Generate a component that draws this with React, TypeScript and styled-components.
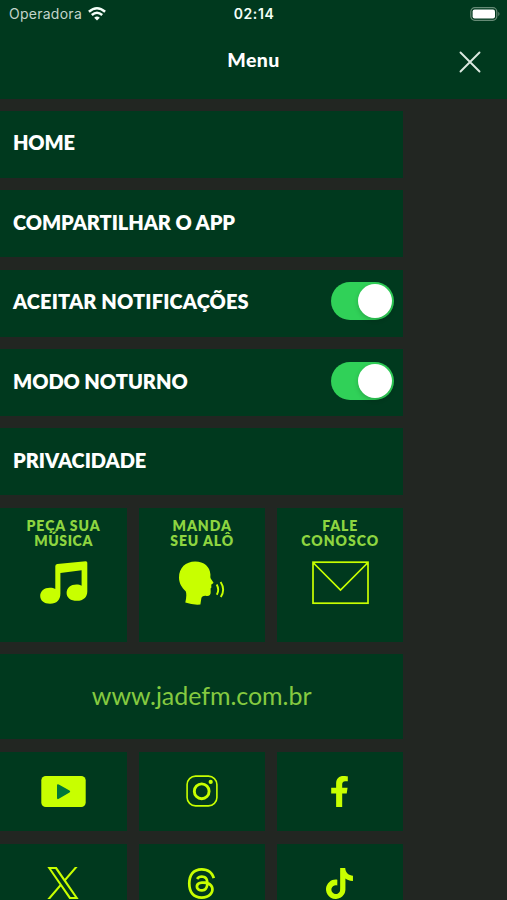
import React from "react";
import styled, { createGlobalStyle } from "styled-components";
import { FaFacebookF } from "react-icons/fa";
import { SiThreads, SiTiktok } from "react-icons/si";

const GlobalStyle = createGlobalStyle`
  * { box-sizing: border-box; }
  body { margin: 0; background: #222622; }
`;

const lime = "#c8ff00";
const panel = "#00391e";

const Screen = styled.div`
  width: 507px;
  height: 900px;
  overflow: hidden;
  background: #222622;
  color: #fff;
  font-family: Lato, "Liberation Sans", sans-serif;
`;

const Header = styled.header`
  height: 98.5px;
  background: ${panel};
`;

const StatusBar = styled.div`
  height: 28px;
  padding: 0 6px 0 9px;
  display: grid;
  grid-template-columns: 1fr auto 1fr;
  align-items: center;
  font-family: Inter, sans-serif;
  font-size: 14px;
  line-height: 28px;
`;

const Carrier = styled.div`
  display: flex;
  align-items: center;
  gap: 6px;
  color: #c3d5cb;
  letter-spacing: 0.26px;
`;

const Clock = styled.div`
  margin-right: 2px;
  font-weight: 600;
  letter-spacing: 0.6px;
  color: #f3fff8;
`;

const Battery = styled.div`
  display: flex;
  justify-content: flex-end;
`;

const TitleBar = styled.div`
  height: 66px;
  padding: 0 26px;
  display: grid;
  grid-template-columns: 1fr auto 1fr;
  align-items: center;
`;

const Title = styled.h1`
  grid-column: 2;
  margin: 0;
  padding-bottom: 2px;
  font-size: 19.5px;
  line-height: 24px;
  font-weight: 900;
  letter-spacing: 0.4px;
`;

const CloseButton = styled.button`
  justify-self: end;
  display: flex;
  padding: 0;
  margin-top: 2px;
  border: 0;
  background: none;
`;

const Menu = styled.main`
  width: 403.3px;
  padding-top: 12.3px;
  display: flex;
  flex-direction: column;
  gap: 12.2px;
`;

const MenuRow = styled.div`
  height: 67.2px;
  padding: 0 9.500px 4px 13px;
  display: flex;
  align-items: center;
  justify-content: space-between;
  background: ${panel};
`;

const Label = styled.span<{ $spacing: number }>`
  font-size: 20px;
  line-height: 24px;
  font-weight: 800;
  white-space: nowrap;
  letter-spacing: ${(p) => p.$spacing}px;
`;

const Switch = styled.button`
  width: 63px;
  height: 38px;
  padding: 2px;
  border: 0;
  border-radius: 19px;
  background: #30d158;
  display: flex;
  justify-content: flex-end;
`;

const Knob = styled.span`
  width: 34px;
  height: 34px;
  border-radius: 50%;
  background: #fff;
  box-shadow: 0 2px 5px rgba(0, 0, 0, 0.18);
`;

const TileGrid = styled.div`
  display: grid;
  grid-template-columns: 127.2px 126px 126px;
  column-gap: 12px;
`;

const ActionTile = styled.div`
  height: 134.2px;
  padding-top: 10.500px;
  display: flex;
  flex-direction: column;
  align-items: center;
  background: ${panel};
`;

const Caption = styled.div<{ $first: number; $second: number }>`
  height: 43px;
  font-size: 14px;
  line-height: 15px;
  font-weight: 800;
  text-align: center;
  white-space: nowrap;
  color: #8ed540;
  span { display: block; }
  span:first-child { letter-spacing: ${(p) => p.$first}px; }
  span:last-child { letter-spacing: ${(p) => p.$second}px; }
`;

const Website = styled.div`
  height: 85.4px;
  padding-bottom: 4px;
  display: flex;
  align-items: center;
  justify-content: center;
  background: ${panel};
  color: #85ca40;
  font-size: 25px;
  letter-spacing: -0.050px;
`;

const SocialTile = styled.div`
  height: 79.7px;
  padding-right: 1px;
  display: flex;
  align-items: center;
  justify-content: center;
  background: ${panel};
  color: ${lime};
`;

const WifiIcon = () => (
  <svg width="18" height="14" viewBox="0 0 18 14" fill="none" stroke="#f5fff9" strokeWidth="2.5">
    <path d="M.9 4.8Q9-2.2 17.1 4.8" />
    <path d="M3.8 8Q9 3.4 14.2 8" />
    <path d="M9 13.6 6.2 10.8Q9 8.3 11.8 10.8Z" fill="#f5fff9" stroke="none" />
  </svg>
);

const BatteryIcon = () => (
  <svg width="31" height="14" viewBox="0 0 31 14">
    <rect x=".8" y=".7" width="26" height="12.6" rx="4" fill="none" stroke="#668b76" strokeWidth="1.2" />
    <rect x="2.6" y="2.4" width="22.4" height="9.2" rx="2" fill="#fff" />
    <path d="M28.3 4.8q2.4 2.2 0 4.4z" fill="#668b76" />
  </svg>
);

const MusicIcon = () => (
  <svg width="48" height="44" viewBox="40 562 48 44" fill={lime}>
    <path d="M55.300 567.200q0-1.900 1.900-2.100L85.800 562.200q1.500 0 1.500 1.600V592.500c0 5.700-3.800 9.300-10.400 9.300-6.200 0-10.300-3.100-10.300-7.900 0-4.900 4.300-8.400 9.800-8.400 2.200 0 3.900.500 5.200 1.200V571.200L60.400 573.900V594.500c0 6.300-3.700 10.200-10.300 10.200-6.100 0-9.900-3.200-9.900-7.700 0-4.800 4.100-8.300 9.600-8.300 2.300 0 4.200.500 5.500 1.300z" />
  </svg>
);

const SpeakIcon = () => (
  <svg width="48" height="44" viewBox="178 561 48 44">
    <path
      fill={lime}
      d="M185.300 602.500c1-4.300 1.500-8.500.4-11.300-4.200-3.600-6.700-8.300-6.700-13.600 0-9.700 6.700-16 16.200-16 9 0 14.700 5.300 15.200 12.700.100 1.800-.300 2.800.3 4.100l2.700 4.200q.3 1-1.900 1.700l-.3 1.600.3 1.300-.9 1.400.1 3.300c0 3.100-1.200 4.200-4.200 4-3.500-.300-4.700.600-5.200 2.700l-.900 5.900q-7.500.700-15.100-2z"
    />
    <path d="M216.700 584.500q3 5.200.1 10.200M220.600 582q5 7.600.2 15" fill="none" stroke={lime} strokeWidth="1.900" />
  </svg>
);

const MailIcon = () => (
  <svg width="57" height="44" viewBox="0 0 57 44" fill="none" stroke={lime} strokeWidth="1.700">
    <rect x="1" y="1.200" width="55" height="41" />
    <path d="M1.500 2 28.500 29 55.500 2" />
    <path d="M1 1h3.500L1 4.500zM56 1h-3.500L56 4.500z" fill={lime} stroke="none" />
  </svg>
);

const YoutubeIcon = () => (
  <svg width="45" height="31" viewBox="0 0 45 31">
    <rect x=".3" width="44.400" height="31" rx="4.500" fill={lime} />
    <path d="M16 9.500q0-2 1.800-1L28.500 14.600q1.500.9 0 1.800L17.800 22.800q-1.800 1-1.800-1z" fill="#00763a" />
  </svg>
);

const InstagramIcon = () => (
  <svg width="32" height="32" viewBox="0 0 32 32" fill="none" stroke={lime}>
    <rect x="1.100" y="1.100" width="29.800" height="29.800" rx="8.500" strokeWidth="1.600" />
    <circle cx="15.700" cy="16.300" r="7.400" strokeWidth="2.900" />
    <circle cx="24.700" cy="6.900" r="2.100" fill={lime} stroke="none" />
  </svg>
);

const XIcon = () => (
  <svg width="32" height="32" viewBox="0 0 24 24" fill={lime}>
    <path d="M14.234 10.162 22.977 0h-2.072l-7.591 8.824L7.251 0H.258l9.168 13.343L.258 24H2.33l8.016-9.318L16.749 24h6.993zm-2.837 3.299-.929-1.329L3.076 1.56h3.182l5.965 8.532.929 1.329 7.754 11.09h-3.182z" />
  </svg>
);

const Toggle = ({ label }: { label: string }) => (
  <Switch role="switch" aria-checked aria-label={label}>
    <Knob />
  </Switch>
);

const menuItems = [
  { text: "HOME", spacing: -0.2, toggle: false },
  { text: "COMPARTILHAR O APP", spacing: -0.08, toggle: false },
  { text: "ACEITAR NOTIFICAÇÕES", spacing: 0.13, toggle: true },
  { text: "MODO NOTURNO", spacing: -0.05, toggle: true },
  { text: "PRIVACIDADE", spacing: -0.05, toggle: false },
];

export default function App() {
  return (
    <Screen>
      <GlobalStyle />
      <Header>
        <StatusBar>
          <Carrier>Operadora <WifiIcon /></Carrier>
          <Clock>02:14</Clock>
          <Battery><BatteryIcon /></Battery>
        </StatusBar>
        <TitleBar>
          <Title>Menu</Title>
          <CloseButton aria-label="Fechar">
            <svg width="22" height="22" viewBox="0 0 22 22" stroke="#dce9e1" strokeWidth="1.900" strokeLinecap="round">
              <path d="M1.500 1.500 20.500 20.500M20.500 1.500 1.500 20.500" />
            </svg>
          </CloseButton>
        </TitleBar>
      </Header>
      <Menu>
        {menuItems.map((item) => (
          <MenuRow key={item.text}>
            <Label $spacing={item.spacing}>{item.text}</Label>
            {item.toggle && <Toggle label={item.text} />}
          </MenuRow>
        ))}
        <TileGrid>
          <ActionTile>
            <Caption $first={0.95} $second={0.6}><span>PEÇA SUA</span><span>MÚSICA</span></Caption>
            <MusicIcon />
          </ActionTile>
          <ActionTile>
            <Caption $first={0.95} $second={0.9}><span>MANDA</span><span>SEU ALÔ</span></Caption>
            <SpeakIcon />
          </ActionTile>
          <ActionTile>
            <Caption $first={0.9} $second={1}><span>FALE</span><span>CONOSCO</span></Caption>
            <MailIcon />
          </ActionTile>
        </TileGrid>
        <Website>www.jadefm.com.br</Website>
        <TileGrid>
          <SocialTile><YoutubeIcon /></SocialTile>
          <SocialTile><InstagramIcon /></SocialTile>
          <SocialTile><FaFacebookF size={31} /></SocialTile>
        </TileGrid>
        <TileGrid>
          <SocialTile><XIcon /></SocialTile>
          <SocialTile><SiThreads size={31} /></SocialTile>
          <SocialTile><SiTiktok size={31} /></SocialTile>
        </TileGrid>
      </Menu>
    </Screen>
  );
}
